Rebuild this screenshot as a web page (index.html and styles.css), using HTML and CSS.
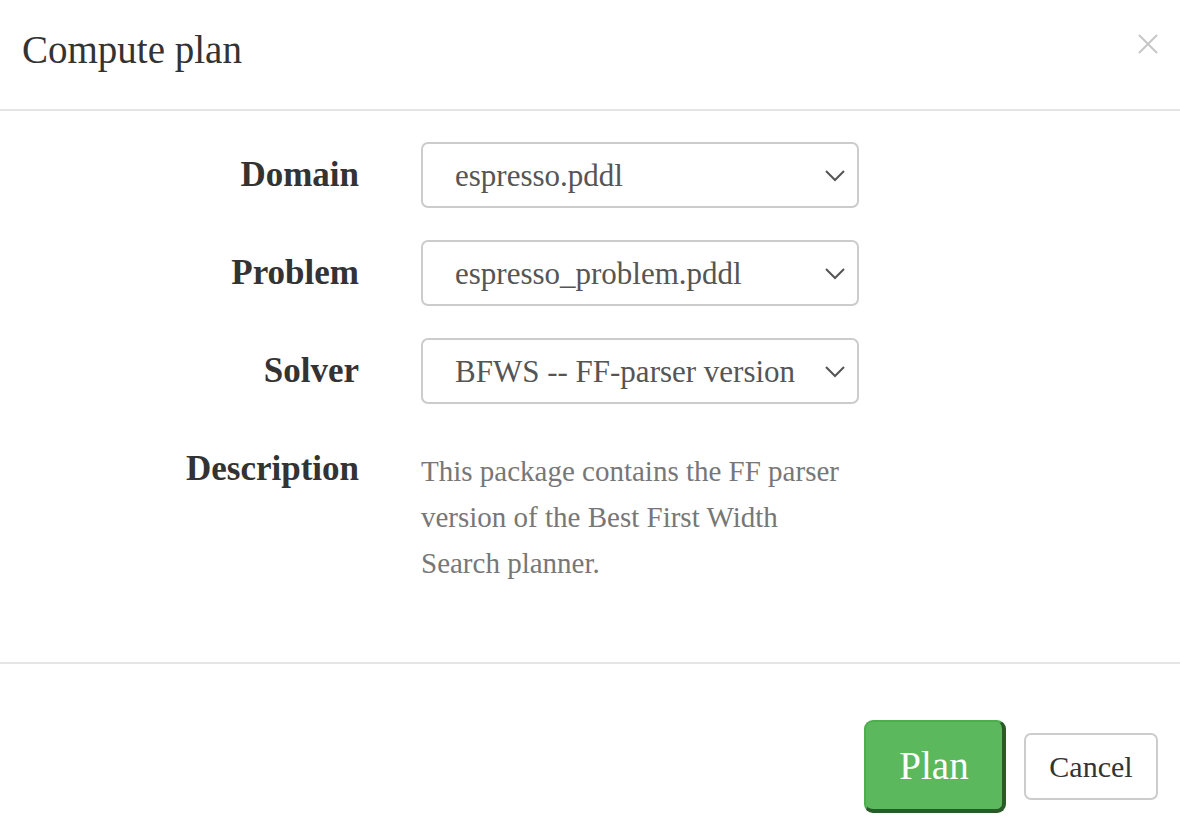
FILE: index.html
```html
<!DOCTYPE html>
<html lang="en">
<head>
<meta charset="utf-8">
<title>Compute plan</title>
<link rel="stylesheet" href="styles.css">
</head>
<body>
<div class="modal">
  <div class="modal-header">
    <h4 class="modal-title">Compute plan</h4>
    <button class="close" type="button" aria-label="Close">
      <svg width="20" height="20" viewBox="0 0 20 20"><path d="M1 1 L19 19 M19 1 L1 19" stroke="#c6c6c6" stroke-width="2" fill="none"/></svg>
    </button>
  </div>
  <div class="modal-body">
    <div class="form-grid">
      <label class="form-label">Domain</label>
      <div class="select-wrap">
        <select class="form-select"><option>espresso.pddl</option></select>
        <svg class="chevron" width="20" height="12" viewBox="0 0 20 12"><path d="M1 1 L10 10 L19 1" stroke="#555" stroke-width="2" fill="none"/></svg>
      </div>

      <label class="form-label">Problem</label>
      <div class="select-wrap">
        <select class="form-select"><option>espresso_problem.pddl</option></select>
        <svg class="chevron" width="20" height="12" viewBox="0 0 20 12"><path d="M1 1 L10 10 L19 1" stroke="#555" stroke-width="2" fill="none"/></svg>
      </div>

      <label class="form-label">Solver</label>
      <div class="select-wrap">
        <select class="form-select"><option>BFWS -- FF-parser version</option></select>
        <svg class="chevron" width="20" height="12" viewBox="0 0 20 12"><path d="M1 1 L10 10 L19 1" stroke="#555" stroke-width="2" fill="none"/></svg>
      </div>

      <label class="form-label">Description</label>
      <p class="description">This package contains the FF parser version of the Best First Width Search planner.</p>
    </div>
  </div>
  <div class="modal-footer">
    <button class="btn btn-success" type="button">Plan</button>
    <button class="btn btn-default" type="button">Cancel</button>
  </div>
</div>
</body>
</html>
```
FILE: styles.css
```css
* { box-sizing: border-box; }

html, body {
  margin: 0;
  padding: 0;
  background: #fff;
  font-family: "Liberation Serif", "Times New Roman", serif;
  color: #333;
}

.modal {
  width: 1180px;
  min-height: 835px;
}

.modal-header {
  display: flex;
  justify-content: space-between;
  align-items: flex-start;
  height: 111px;
  padding: 27px 22px 0 22px;
  border-bottom: 2px solid #e5e5e5;
}

.modal-title {
  margin: 0;
  font-size: 39px;
  font-weight: normal;
  line-height: 46px;
  color: #333;
}

.close {
  margin-top: 7px;
  padding: 0;
  border: 0;
  background: none;
  width: 20px;
  height: 20px;
  display: block;
}
.close svg { display: block; }

.modal-body {
  padding: 31px 22px 76px 22px;
  border-bottom: 2px solid #e5e5e5;
}

.form-grid {
  display: grid;
  grid-template-columns: 337px 438px;
  column-gap: 62px;
  row-gap: 32px;
}

.form-label {
  text-align: right;
  font-weight: bold;
  font-size: 35px;
  line-height: 66px;
  color: #333;
}

.select-wrap {
  position: relative;
  height: 66px;
}

.form-select {
  appearance: none;
  -webkit-appearance: none;
  width: 100%;
  height: 66px;
  margin: 0;
  padding: 0 60px 0 32px;
  border: 2px solid #ccc;
  border-radius: 7px;
  background: #fff;
  font-family: "Liberation Serif", "Times New Roman", serif;
  font-size: 31px;
  color: #555;
}

.chevron {
  position: absolute;
  right: 14px;
  top: 28px;
  pointer-events: none;
}

.description {
  margin: 0;
  padding-top: 12px;
  font-size: 29px;
  line-height: 46px;
  color: #777;
}

.modal-footer {
  display: flex;
  justify-content: flex-end;
  align-items: center;
  gap: 18px;
  padding: 56px 22px 0 22px;
}

.btn {
  font-family: "Liberation Serif", "Times New Roman", serif;
  cursor: pointer;
}

.btn-success {
  width: 142px;
  height: 93px;
  background: #5cb85c;
  color: #fff;
  font-size: 39px;
  border: 2px solid #4cae4c;
  border-right: 4px solid #2b5a29;
  border-bottom: 4px solid #2b5a29;
  border-radius: 9px;
  padding: 0;
}

.btn-default {
  width: 134px;
  height: 67px;
  background: #fff;
  color: #333;
  font-size: 30px;
  border: 2px solid #ccc;
  border-radius: 7px;
  padding: 0;
}
```
